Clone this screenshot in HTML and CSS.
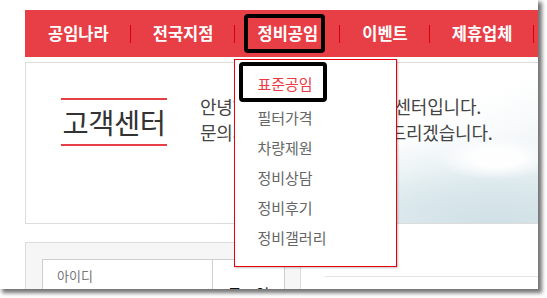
FILE: index.html
```html
<!DOCTYPE html>
<html lang="ko">
<head>
<meta charset="utf-8">
<link rel="stylesheet" href="styles.css">
</head>
<body>
<div class="frame">
  <div class="page">
    <nav class="gnb">
      <a class="gnb-item">공임나라</a>
      <span class="sep"></span>
      <a class="gnb-item">전국지점</a>
      <span class="sep"></span>
      <div class="gnb-item active">
        정비공임
        <span class="mark mark-nav"></span>
        <ul class="dropdown">
          <li class="on">표준공임<span class="mark mark-sub"></span></li>
          <li>필터가격</li>
          <li>차량제원</li>
          <li>정비상담</li>
          <li>정비후기</li>
          <li>정비갤러리</li>
        </ul>
      </div>
      <span class="sep"></span>
      <a class="gnb-item">이벤트</a>
      <span class="sep"></span>
      <a class="gnb-item">제휴업체</a>
      <span class="sep"></span>
    </nav>

    <section class="visual">
      <h1 class="title">고객센터</h1>
      <p class="greet">안녕하세요. 공임나라 고객센터입니다.<br>문의사항은 친절하게 답변드리겠습니다.</p>
    </section>

    <div class="bottom">
      <div class="login">
        <div class="inputs">
          <div class="field">아이디</div>
        </div>
        <button class="btn">로그인</button>
      </div>
      <div class="right">
        <div class="rule"></div>
      </div>
    </div>
  </div>
</div>
</body>
</html>
```

FILE: styles.css
```css
* { box-sizing: border-box; margin: 0; padding: 0; }
html, body { background: #fff; }
body {
  font-family: "Noto Sans CJK KR", "Noto Sans", sans-serif;
  width: 547px;
  height: 298px;
  overflow: hidden;
}
.frame {
  width: 538px;
  height: 289px;
  overflow: hidden;
  background: #fff;
  box-shadow: 3px 3px 4px 1px rgba(0,0,0,0.55);
  position: relative;
}
.page {
  width: 640px;
  padding: 10px 0 0 25px;
}
.gnb {
  height: 47px;
  background: #e83e46;
  display: flex;
  align-items: center;
}
.gnb-item {
  position: relative;
  color: #fff;
  font-weight: bold;
  font-size: 16.5px;
  line-height: 47px;
  padding: 0 21px 0 22px;
  white-space: nowrap;
}
.gnb-item:first-child { padding-left: 23px; }
.sep {
  width: 1px;
  height: 18px;
  background: #d8000c;
}
.mark {
  position: absolute;
  border: 4px solid #000;
  border-radius: 4px;
  pointer-events: none;
}
.mark-nav {
  left: 9px;
  top: 4px;
  width: 81px;
  height: 39px;
}
.dropdown {
  position: absolute;
  left: -1px;
  top: 49px;
  width: 163px;
  height: 208px;
  background: #fff;
  border: 1px solid #e8000b;
  box-shadow: 1px 1px 2px rgba(0,0,0,0.25);
  list-style: none;
  padding-top: 9px;
  z-index: 5;
}
.dropdown li {
  position: relative;
  font-size: 15px;
  font-weight: normal;
  color: #666;
  line-height: 30px;
  padding-left: 22px;
}
.dropdown li.on {
  color: #ee3a44;
  margin-bottom: 4px;
}
.mark-sub {
  left: 4px;
  top: -7px;
  width: 88px;
  height: 40px;
}
.visual {
  margin-top: 5px;
  height: 162px;
  border: 1px solid #dcdcdc;
  display: flex;
  align-items: flex-start;
  padding: 35px 0 0 35px;
  background:
    radial-gradient(ellipse 60px 22px at 470px 95px, rgba(255,255,255,0.95) 40%, rgba(255,255,255,0) 100%),
    radial-gradient(ellipse 260px 90px at 470px 160px, #cfe0e6 0%, #dbe8ec 40%, rgba(230,240,243,0.6) 70%, rgba(255,255,255,0) 100%),
    linear-gradient(155deg, #fff 55%, #edf3f5 80%, #dbe7eb 100%);
}
.title {
  width: 106px;
  border-top: 2px solid #e83e46;
  border-bottom: 2px solid #e83e46;
  font-size: 28.5px;
  font-weight: normal;
  color: #333;
  line-height: 44px;
  text-align: center;
  letter-spacing: -0.5px;
}
.greet {
  margin: -5px 0 0 33px;
  font-size: 18px;
  line-height: 26px;
  color: #444;
  white-space: nowrap;
  letter-spacing: -0.2px;
}
.bottom {
  display: flex;
  margin-top: 18px;
}
.login {
  width: 276px;
  height: 60px;
  background: #f6f6f6;
  border: 1px solid #dcdcdc;
  display: flex;
  padding: 16px 0 0 16px;
}
.inputs { width: 170px; }
.field {
  height: 40px;
  background: #fff;
  border: 1px solid #cfcfcf;
  border-right: none;
  font-family: "DejaVu Sans", "Noto Sans CJK KR", sans-serif;
  font-size: 13px;
  color: #777;
  padding: 6px 0 0 14px;
}
.btn {
  width: 73px;
  height: 60px;
  background: #fff;
  border: 1px solid #cfcfcf;
  font-family: "Noto Sans CJK KR", sans-serif;
  font-size: 15px;
  color: #111;
  padding-top: 8px;
}
.right {
  flex: 1;
  padding: 34px 0 0 24px;
}
.rule {
  height: 1px;
  background: #e3e3e3;
}
```
